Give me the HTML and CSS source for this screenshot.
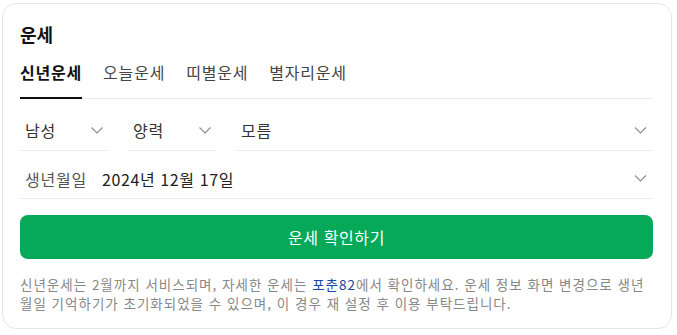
FILE: index.html
```html
<!DOCTYPE html>
<html lang="ko">
<head>
<meta charset="utf-8">
<link rel="stylesheet" href="styles.css">
</head>
<body>
<div class="card">
  <h2 class="title">운세</h2>
  <nav class="tabs">
    <span class="tab active">신년운세</span>
    <span class="tab">오늘운세</span>
    <span class="tab">띠별운세</span>
    <span class="tab">별자리운세</span>
  </nav>
  <div class="row">
    <div class="select short"><span>남성</span><svg class="chev" viewBox="0 0 12 7"><path d="M0.5 0.5 L6 6 L11.5 0.5" /></svg></div>
    <div class="select short"><span>양력</span><svg class="chev" viewBox="0 0 12 7"><path d="M0.5 0.5 L6 6 L11.5 0.5" /></svg></div>
    <div class="select grow"><span>모름</span><svg class="chev" viewBox="0 0 12 7"><path d="M0.5 0.5 L6 6 L11.5 0.5" /></svg></div>
  </div>
  <div class="select birth">
    <span class="label">생년월일</span>
    <span class="value">2024년 12월 17일</span>
    <svg class="chev" viewBox="0 0 12 7"><path d="M0.5 0.5 L6 6 L11.5 0.5" /></svg>
  </div>
  <button class="btn">운세 확인하기</button>
  <p class="notice">신년운세는 2월까지 서비스되며, 자세한 운세는 <a href="#">포춘82</a>에서 확인하세요. 운세 정보 화면 변경으로 생년월일 기억하기가 초기화되었을 수 있으며, 이 경우 재 설정 후 이용 부탁드립니다.</p>
</div>
</body>
</html>
```
FILE: styles.css
```css
html, body {
  margin: 0;
  padding: 0;
  background: #fff;
}
body {
  font-family: "Noto Sans CJK KR", "Noto Sans", sans-serif;
  color: #222;
}
.card {
  box-sizing: border-box;
  width: 670px;
  height: 326px;
  margin: 3px 0 0 2px;
  border: 1px solid #e6e6e6;
  border-radius: 14px;
  padding: 16px 18px 0 17px;
}
.title {
  margin: 0;
  font-size: 18px;
  font-weight: 700;
  line-height: 28px;
  color: #111;
}
.tabs {
  display: flex;
  gap: 21px;
  margin-top: 10px;
  border-bottom: 1px solid #ebebeb;
}
.tab {
  font-size: 16px;
  letter-spacing: 0.8px;
  line-height: 22px;
  padding: 3px 0 14px;
  color: #444;
  margin-bottom: -1px;
  border-bottom: 2px solid transparent;
}
.tab.active {
  font-weight: 700;
  color: #111;
  border-bottom-color: #111;
}
.row {
  display: flex;
  gap: 20px;
  margin-top: 3px;
}
.select {
  box-sizing: border-box;
  display: flex;
  align-items: center;
  height: 49px;
  padding: 8px 0 0 5px;
  border-bottom: 1px solid #ebebeb;
  font-size: 16px;
  letter-spacing: 0.8px;
  color: #333;
}
.short {
  width: 88px;
}
.grow {
  flex: 1;
}
.chev {
  width: 12px;
  height: 7px;
  margin-left: auto;
  margin-right: 5px;
  fill: none;
  stroke: #8a8a8a;
  stroke-width: 1.1;
}
.grow .chev,
.birth .chev {
  width: 13px;
  margin-right: 6px;
}
.birth {
  height: 48px;
}
.birth .label {
  color: #555;
  width: 77px;
}
.birth .value {
  color: #222;
  letter-spacing: 0.6px;
}
.btn {
  display: block;
  width: 100%;
  height: 44px;
  margin-top: 16px;
  border: none;
  border-radius: 8px;
  background: #06a958;
  color: #fff;
  font-family: inherit;
  font-size: 16px;
  letter-spacing: 0.6px;
}
.notice {
  margin: 16px 0 0;
  font-size: 13.5px;
  letter-spacing: 1px;
  line-height: 19px;
  color: #888;
}
.notice a {
  color: #1b45a0;
  text-decoration: none;
}
```
